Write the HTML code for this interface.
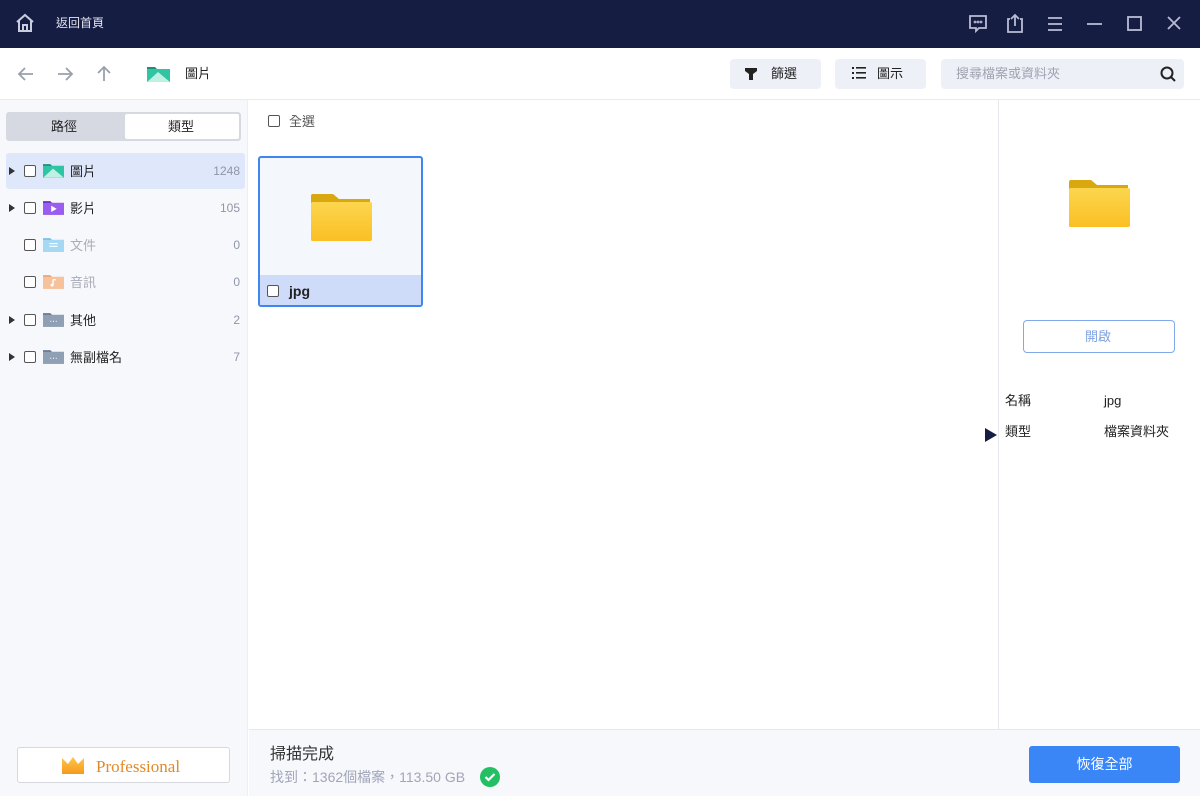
<!DOCTYPE html>
<html><head><meta charset="utf-8"><style>
*{margin:0;padding:0;box-sizing:border-box}
body{width:1200px;height:796px;overflow:hidden;font-family:"Liberation Sans","Noto Sans CJK TC",sans-serif;font-size:13px;line-height:1.15;color:#222;background:#fff;position:relative}
.abs{position:absolute}
.cb{position:absolute;width:12px;height:12px;border:1.3px solid #555;border-radius:2px;background:#fff}
.tri{position:absolute;width:0;height:0;border-top:4px solid transparent;border-bottom:4px solid transparent;border-left:6px solid #333}
</style></head><body>
<!-- title bar -->
<div class="abs" style="left:0;top:0;width:1200px;height:48px;background:#161d43"></div>
<svg class="abs" style="left:14px;top:12px" width="22" height="22" viewBox="0 0 22 22" fill="none" stroke="#c9cde0" stroke-width="2"><path d="M3 10L11 3l8 7M5 8v11h12V8M9 19v-6h4v6"/></svg>
<div class="abs" style="left:56px;top:17px;color:#e4e6f0;font-size:12px">返回首頁</div>
<svg class="abs" style="left:966px;top:12px" width="220" height="24" viewBox="0 0 220 24" fill="none" stroke="#b8bdd6" stroke-width="1.8">
<path d="M4 4h16v12h-7l-3 3v-3H4z"/><circle cx="9" cy="10" r=".5"/><circle cx="12" cy="10" r=".5"/><circle cx="15" cy="10" r=".5"/>
<path d="M44 7h-2v13h14V7h-2M49 3v11M45 7l4-4 4 4"/>
<path d="M82 6h14M82 12h14M82 18h14"/>
<path d="M121 12h15"/>
<rect x="162" y="5" width="13" height="13"/>
<path d="M202 5l12 12M214 5l-12 12"/>
</svg>
<!-- toolbar -->
<div class="abs" style="left:0;top:99px;width:1200px;height:1px;background:#e8ebf0"></div>
<svg class="abs" style="left:16px;top:64px" width="110" height="20" viewBox="0 0 110 20" fill="none" stroke="#9aa0ab" stroke-width="1.8"><path d="M3 10h14M9 4l-6 6 6 6M42 10h14M50 4l6 6-6 6M88 17V3M82 9l6-6 6 6"/></svg>
<svg class="abs" style="left:147px;top:65px" width="23" height="17" viewBox="0 0 23 17"><path d="M0 2h8l2 2h13v13H0z" fill="#1f8f7a"/><rect y="4" width="23" height="13" fill="#2ec4a4"/><path d="M0 17l11-10 12 10z" fill="#bff0e2"/></svg>
<div class="abs" style="left:185px;top:67px;font-size:13px">圖片</div>
<div class="abs" style="left:730px;top:59px;width:91px;height:30px;background:#edf0f7;border-radius:4px"></div>
<svg class="abs" style="left:745px;top:68px" width="12" height="12" viewBox="0 0 12 12"><path d="M0 0h12v3L8 6v6H4V6L0 3z" fill="#222"/></svg>
<div class="abs" style="left:771px;top:67px">篩選</div>
<div class="abs" style="left:835px;top:59px;width:91px;height:30px;background:#edf0f7;border-radius:4px"></div>
<svg class="abs" style="left:852px;top:67px" width="14" height="12" viewBox="0 0 14 12" fill="#222"><rect y="0" width="2" height="2"/><rect y="5" width="2" height="2"/><rect y="10" width="2" height="2"/><rect x="4" y="0" width="10" height="1.6"/><rect x="4" y="5" width="10" height="1.6"/><rect x="4" y="10" width="10" height="1.6"/></svg>
<div class="abs" style="left:877px;top:67px">圖示</div>
<div class="abs" style="left:941px;top:59px;width:243px;height:30px;background:#eef0f7;border-radius:4px"></div>
<div class="abs" style="left:956px;top:67px;color:#9ea3b0">搜尋檔案或資料夾</div>
<svg class="abs" style="left:1159px;top:65px" width="18" height="18" viewBox="0 0 18 18" fill="none" stroke="#222" stroke-width="2"><circle cx="8" cy="8" r="5.5"/><path d="M12 12l4 4"/></svg>
<!-- sidebar -->
<div class="abs" style="left:0;top:100px;width:248px;height:696px;background:#f7f8fc;border-right:1px solid #eceef3"></div>
<div class="abs" style="left:6px;top:112px;width:235px;height:29px;background:#d7d9e2;border-radius:3px"></div>
<div class="abs" style="left:125px;top:114px;width:114px;height:25px;background:#fff;border-radius:2px"></div>
<div class="abs" style="left:51px;top:120px">路徑</div>
<div class="abs" style="left:168px;top:120px">類型</div>
<div class="abs" style="left:6px;top:153px;width:239px;height:36px;background:#dfe7fb;border-radius:3px"></div>
<div class="tri" style="left:9px;top:167px"></div><div class="cb" style="left:24px;top:165px"></div>
<svg class="abs" style="left:43px;top:162px" width="21" height="16" viewBox="0 0 23 17"><path d="M0 2h8l2 2h13v13H0z" fill="#1f8f7a"/><rect y="4" width="23" height="13" fill="#2ec4a4"/><path d="M0 17l11-10 12 10z" fill="#bff0e2"/></svg>
<div class="abs" style="left:70px;top:165px">圖片</div><div class="abs" style="right:960px;top:165px;color:#9095a8;font-size:12px">1248</div>
<div class="tri" style="left:9px;top:204px"></div><div class="cb" style="left:24px;top:202px"></div>
<svg class="abs" style="left:43px;top:199px" width="21" height="16" viewBox="0 0 23 17"><path d="M0 2h8l2 2h13v13H0z" fill="#6b32c8"/><rect y="4" width="23" height="13" fill="#9b5cf0"/><path d="M9 7l6 3.5-6 3.5z" fill="#fff"/></svg>
<div class="abs" style="left:70px;top:202px">影片</div><div class="abs" style="right:960px;top:202px;color:#9095a8;font-size:12px">105</div>
<div class="cb" style="left:24px;top:239px"></div>
<svg class="abs" style="left:43px;top:236px" width="21" height="16" viewBox="0 0 23 17"><path d="M0 2h8l2 2h13v13H0z" fill="#7cc0e6"/><rect y="4" width="23" height="13" fill="#a5d8f3"/><path d="M7 8h9M7 11h9" stroke="#fff" stroke-width="1.3"/></svg>
<div class="abs" style="left:70px;top:239px;color:#a8acb8">文件</div><div class="abs" style="right:960px;top:239px;color:#9095a8;font-size:12px">0</div>
<div class="cb" style="left:24px;top:276px"></div>
<svg class="abs" style="left:43px;top:273px" width="21" height="16" viewBox="0 0 23 17"><path d="M0 2h8l2 2h13v13H0z" fill="#eaa77a"/><rect y="4" width="23" height="13" fill="#f6c29c"/><path d="M11 7v6M11 7h3" stroke="#fff" stroke-width="1.5"/><circle cx="10" cy="13" r="1.6" fill="#fff"/></svg>
<div class="abs" style="left:70px;top:276px;color:#a8acb8">音訊</div><div class="abs" style="right:960px;top:276px;color:#9095a8;font-size:12px">0</div>
<div class="tri" style="left:9px;top:316px"></div><div class="cb" style="left:24px;top:314px"></div>
<svg class="abs" style="left:43px;top:311px" width="21" height="16" viewBox="0 0 23 17"><path d="M0 2h8l2 2h13v13H0z" fill="#6a7b90"/><rect y="4" width="23" height="13" fill="#8fa0b4"/><path d="M8 11h1M11 11h1M14 11h1" stroke="#fff" stroke-width="1.2"/></svg>
<div class="abs" style="left:70px;top:314px">其他</div><div class="abs" style="right:960px;top:314px;color:#9095a8;font-size:12px">2</div>
<div class="tri" style="left:9px;top:353px"></div><div class="cb" style="left:24px;top:351px"></div>
<svg class="abs" style="left:43px;top:348px" width="21" height="16" viewBox="0 0 23 17"><path d="M0 2h8l2 2h13v13H0z" fill="#6a7b90"/><rect y="4" width="23" height="13" fill="#8fa0b4"/><path d="M8 11h1M11 11h1M14 11h1" stroke="#fff" stroke-width="1.2"/></svg>
<div class="abs" style="left:70px;top:351px">無副檔名</div><div class="abs" style="right:960px;top:351px;color:#9095a8;font-size:12px">7</div>
<div class="abs" style="left:17px;top:747px;width:213px;height:36px;background:#fff;border:1px solid #d6d8de;border-radius:3px"></div>
<svg class="abs" style="left:61px;top:756px" width="24" height="18" viewBox="0 0 24 18"><defs><linearGradient id="g" x1="0" y1="0" x2="0" y2="1"><stop offset="0" stop-color="#ffc64a"/><stop offset="1" stop-color="#f59a1e"/></linearGradient></defs><path d="M1 2l6 6 5-7 5 7 6-6v16H1z" fill="url(#g)"/></svg>
<div class="abs" style="left:96px;top:757px;color:#e08a2a;font-family:'Liberation Serif',serif;font-size:17px">Professional</div>
<!-- main -->
<div class="cb" style="left:268px;top:115px"></div>
<div class="abs" style="left:289px;top:115px;color:#555">全選</div>
<div class="abs" style="left:258px;top:156px;width:165px;height:151px;border:2px solid #3f86f0;border-radius:3px;background:#f4f8fd;overflow:hidden">
<div class="abs" style="left:0;top:117px;width:161px;height:32px;background:#cfdcf9"></div>
</div>
<svg class="abs" style="left:311px;top:194px" width="61" height="47" viewBox="0 0 61 47"><defs><linearGradient id="f" x1="0" y1="0" x2="0" y2="1"><stop offset="0" stop-color="#fbd64e"/><stop offset="1" stop-color="#fbbf24"/></linearGradient></defs><path d="M2 0h20l6 5h31v42H2a2 2 0 0 1-2-2V2a2 2 0 0 1 2-2z" fill="#d9a70e"/><rect y="8" width="61" height="39" rx="2" fill="url(#f)"/></svg>
<div class="cb" style="left:267px;top:285px"></div>
<div class="abs" style="left:289px;top:283px;font-weight:bold;font-size:14px">jpg</div>
<!-- right panel -->
<div class="abs" style="left:998px;top:100px;width:1px;height:630px;background:#e6e8ee"></div>
<svg class="abs" style="left:1069px;top:180px" width="61" height="47" viewBox="0 0 61 47"><path d="M2 0h20l6 5h31v42H2a2 2 0 0 1-2-2V2a2 2 0 0 1 2-2z" fill="#d9a70e"/><rect y="8" width="61" height="39" rx="2" fill="url(#f)"/></svg>
<div class="abs" style="left:1023px;top:320px;width:152px;height:33px;border:1.5px solid #7fa9ec;border-radius:4px"></div>
<div class="abs" style="left:1085px;top:330px;color:#7fa3e0">開啟</div>
<div class="abs" style="left:1005px;top:394px">名稱</div><div class="abs" style="left:1104px;top:394px">jpg</div>
<div class="abs" style="left:985px;top:428px;width:0;height:0;border-top:7px solid transparent;border-bottom:7px solid transparent;border-left:12px solid #161d43"></div>
<div class="abs" style="left:1005px;top:425px">類型</div><div class="abs" style="left:1104px;top:425px">檔案資料夾</div>
<!-- bottom -->
<div class="abs" style="left:249px;top:729px;width:951px;height:67px;background:#f7f8fc;border-top:1px solid #e6e8ee"></div>
<div class="abs" style="left:270px;top:746px;font-size:16px;color:#333">掃描完成</div>
<div class="abs" style="left:270px;top:769px;font-size:14px;color:#a0a5b8">找到：1362個檔案，113.50 GB</div>
<svg class="abs" style="left:480px;top:767px" width="20" height="20" viewBox="0 0 20 20"><circle cx="10" cy="10" r="10" fill="#22c063"/><path d="M5.5 10l3 3 6-6" stroke="#fff" stroke-width="2.2" fill="none"/></svg>
<div class="abs" style="left:1029px;top:746px;width:151px;height:37px;background:#3a86f7;border-radius:3px;color:#fff;text-align:center;line-height:37px;font-size:14px">恢復全部</div>
</body></html>
